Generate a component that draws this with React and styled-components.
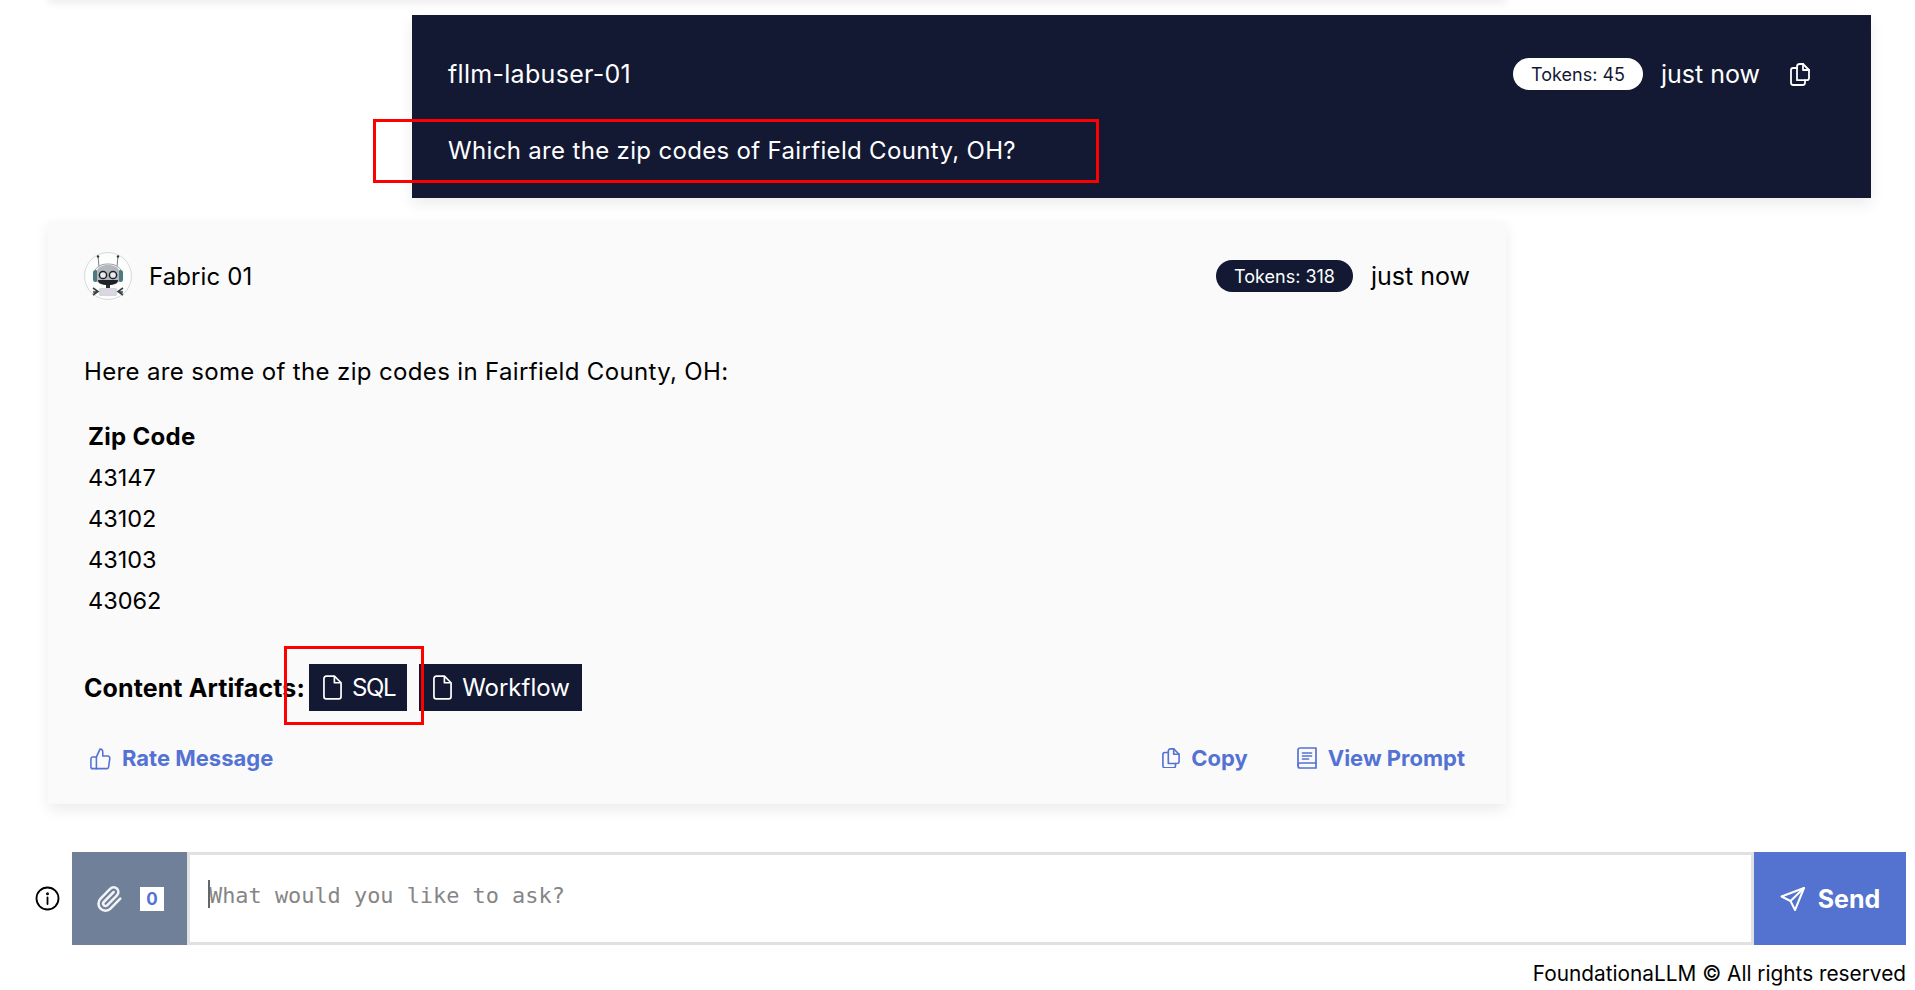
import React from 'react';
import styled, { createGlobalStyle } from 'styled-components';
import { Paperclip } from 'lucide-react';

const GlobalStyle = createGlobalStyle`
    html, body {
        margin: 0;
        padding: 0;
        background: #fff;
        font-family: "Inter", "Liberation Sans", sans-serif;
    }
`;

const CopyIcon = ({ size = 20 }) => (
    <svg width={size} height={size * 1.15} viewBox="0 0 20 23" fill="none" stroke="currentColor" strokeWidth="1.8" strokeLinejoin="round" strokeLinecap="round">
        <path d="M7 17V3.5C7 2.1 8 1 9.4 1h3.6l6 6v8c0 1.2-1 2.2-2.2 2.2H7Z" />
        <path d="M13 1v6h6" />
        <path d="M7 5H3.2C2 5 1 6 1 7.2v12.6C1 21 2 22 3.2 22h9.6c1.2 0 2.2-1 2.2-2.2v-2.6" />
    </svg>
);

const FileIcon = () => (
    <svg width="19" height="25" viewBox="0 0 20 26" fill="none" stroke="currentColor" strokeWidth="1.8" strokeLinejoin="round">
        <path d="M3.5 1h8.5l7 7v14.5c0 1.4-1.1 2.5-2.5 2.5h-13A2.5 2.5 0 0 1 1 22.500v-19A2.500 2.500 0 0 1 3.500 1Z" />
        <path d="M12 1v7h7" />
    </svg>
);

const ThumbIcon = () => (
    <svg width="21" height="23" viewBox="0 0 23 23" preserveAspectRatio="none" fill="none" stroke="currentColor" strokeWidth="1.7" strokeLinejoin="round" strokeLinecap="round">
        <path d="M7 10l4-8c1.700 0 3 1.300 3 3v4h5.500c1.300 0 2.400 1.200 2.200 2.500l-1.300 8.300c-.2 1.100-1.100 1.900-2.200 1.900H7" />
        <path d="M7 10H3a2 2 0 0 0-2 2v7.700a2 2 0 0 0 2 2h4V10Z" />
    </svg>
);

const BookIcon = () => (
    <svg width="20" height="22" viewBox="0 0 20 22" fill="none" stroke="currentColor" strokeWidth="1.7" strokeLinejoin="round" strokeLinecap="round">
        <path d="M3 1h16v20H3a2 2 0 0 1-2-2V3a2 2 0 0 1 2-2Z" />
        <path d="M1 18a2 2 0 0 1 2-2h16M5.500 6h9M5.500 9h9M5.500 12h6" />
    </svg>
);

const InfoIcon = () => (
    <svg width="25" height="25" viewBox="0 0 25 25" fill="none" stroke="#000" strokeWidth="1.8" strokeLinecap="round">
        <circle cx="12.500" cy="12.500" r="11" />
        <path d="M12.500 11.500v6.500" />
        <circle cx="12.500" cy="7.800" r="0.6" fill="#000" />
    </svg>
);

const SendIcon = () => (
    <svg width="26" height="26" viewBox="0 0 26 26" fill="none" stroke="currentColor" strokeWidth="2" strokeLinejoin="round" strokeLinecap="round">
        <path d="M24 2L1.500 10.500l9 4.500 4.500 9L24 2Z" />
        <path d="M24 2L10.500 15" />
    </svg>
);

const RobotAvatar = () => (
    <svg width="48" height="48" viewBox="0 0 48 48">
        <circle cx="24" cy="24" r="23.500" fill="#fcfdfd" stroke="#c8d0d4" strokeWidth="0.8" />
        <path d="M14 4.500l1 10M34 4.500l-1 10" stroke="#6b7278" strokeWidth="0.9" />
        <circle cx="14" cy="4.500" r="1.200" fill="#333" />
        <circle cx="34" cy="4.500" r="1.200" fill="#333" />
        <path d="M10 24c0-8 5-12 14-12s14 4 14 12" fill="none" stroke="#9aa0a5" strokeWidth="1" />
        <rect x="9" y="18" width="5" height="12" rx="2.500" fill="#4d7a80" />
        <rect x="34" y="18" width="5" height="12" rx="2.500" fill="#4d7a80" />
        <path d="M13 20c0-5 5-7 11-7s11 2 11 7v9c0 2-3 3-11 3s-11-1-11-3v-9Z" fill="#b4b7bd" />
        <circle cx="19" cy="23" r="3.600" fill="#e8ecee" stroke="#1f2327" strokeWidth="1.500" />
        <circle cx="29" cy="23" r="3.600" fill="#e8ecee" stroke="#1f2327" strokeWidth="1.500" />
        <path d="M14 28h20c0 3-3 5-10 5s-10-2-10-5Z" fill="#1f2327" />
        <rect x="22" y="33" width="4" height="3" fill="#2a2d31" />
        <rect x="15" y="36" width="18" height="8" rx="1.500" fill="#d4d8db" />
        <rect x="18" y="38" width="12" height="4" fill="#e0d4e8" />
        <path d="M9 36l5 3.500-5 3.500M39 36l-5 3.500 5 3.500M9 40h4M35 40h4" stroke="#3a3e42" strokeWidth="1.600" fill="none" />
    </svg>
);

function App() {
    return (
        <Page>
            <GlobalStyle />
            <PreviousCard />
            <UserRow>
                <UserCard>
                    <CardHeader>
                        <UserName>fllm-labuser-01</UserName>
                        <HeaderMeta>
                            <Tokens light>Tokens: 45</Tokens>
                            <TimeStamp>just now</TimeStamp>
                            <HeaderCopy><CopyIcon /></HeaderCopy>
                        </HeaderMeta>
                    </CardHeader>
                    <UserMessage>Which are the zip codes of Fairfield County, OH?</UserMessage>
                    <QuestionHighlight />
                </UserCard>
            </UserRow>
            <AgentCard>
                <CardHeader>
                    <AgentName>
                        <RobotAvatar />
                        <span>Fabric 01</span>
                    </AgentName>
                    <HeaderMeta>
                        <Tokens>Tokens: 318</Tokens>
                        <TimeStamp>just now</TimeStamp>
                    </HeaderMeta>
                </CardHeader>
                <Intro>Here are some of the zip codes in Fairfield County, OH:</Intro>
                <ZipTable>
                    <thead>
                        <tr><ZipHead>Zip Code</ZipHead></tr>
                    </thead>
                    <tbody>
                        {['43147', '43102', '43103', '43062'].map(zip => (
                            <tr key={zip}><ZipCell>{zip}</ZipCell></tr>
                        ))}
                    </tbody>
                </ZipTable>
                <Artifacts>
                    <ArtifactsLabel>Content Artifacts:</ArtifactsLabel>
                    <ArtifactButton tight><FileIcon />SQL</ArtifactButton>
                    <ArtifactButton><FileIcon />Workflow</ArtifactButton>
                    <ArtifactHighlight />
                </Artifacts>
                <CardFooter>
                    <LinkButton><ThumbIcon />Rate Message</LinkButton>
                    <FooterRight>
                        <LinkButton><CopyIcon size={18} />Copy</LinkButton>
                        <LinkButton><BookIcon />View Prompt</LinkButton>
                    </FooterRight>
                </CardFooter>
            </AgentCard>
            <InputRow>
                <InfoSlot><InfoIcon /></InfoSlot>
                <AttachButton>
                    <Paperclip size={28} strokeWidth={2.2} />
                    <AttachCount>0</AttachCount>
                </AttachButton>
                <InputBox>
                    <Caret />
                    <TextInput placeholder="What would you like to ask?" />
                </InputBox>
                <SendButton>
                    <SendIcon />
                    Send
                </SendButton>
            </InputRow>
            <Footer>FoundationaLLM © All rights reserved</Footer>
        </Page>
    );
}

export default App;

const Page = styled.div`
    width: 1915px;
    height: 990px;
    overflow: hidden;
    display: flex;
    flex-direction: column;
    color: #000;
`;

const PreviousCard = styled.div`
    flex: none;
    height: 10px;
    margin: -10px 409px 0 48px;
    background: #fafafa;
    box-shadow: 0 3px 8px rgba(0, 0, 0, 0.08);
`;

const UserRow = styled.div`
    display: flex;
    justify-content: flex-end;
    padding: 15px 44px 0 0;
`;

const UserCard = styled.div`
    position: relative;
    box-sizing: border-box;
    width: 1459px;
    height: 183px;
    padding: 36px 36px 0;
    background: #131833;
    color: #fff;
    box-shadow: 0 6px 14px rgba(0, 0, 0, 0.08);
`;

const CardHeader = styled.div`
    display: flex;
    align-items: center;
    justify-content: space-between;
`;

const UserName = styled.div`
    font-size: 25px;
    line-height: 46px;
    letter-spacing: 0.3px;
`;

const HeaderMeta = styled.div`
    display: flex;
    align-items: center;
`;

const Tokens = styled.div`
    display: flex;
    align-items: center;
    justify-content: center;
    box-sizing: border-box;
    height: 32px;
    padding: 0 18px;
    border-radius: 16px;
    font-size: 18px;
    background: ${props => (props.light ? '#fff' : '#131833')};
    color: ${props => (props.light ? '#131833' : '#fff')};
`;

const TimeStamp = styled.div`
    margin-left: 18px;
    font-size: 25px;
`;

const HeaderCopy = styled.div`
    display: flex;
    margin: 0 25px 0 30px;
`;

const UserMessage = styled.div`
    margin-top: 37px;
    font-size: 24px;
    line-height: 34px;
    letter-spacing: 0.33px;
`;

const QuestionHighlight = styled.div`
    position: absolute;
    left: -39px;
    top: 104px;
    width: 726px;
    height: 64px;
    box-sizing: border-box;
    border: 3px solid #f00;
`;

const AgentCard = styled.div`
    box-sizing: border-box;
    width: 1458px;
    height: 583px;
    margin: 23px 0 0 48px;
    padding: 31px 36px 0;
    background: #fafafa;
    box-shadow: 0 6px 14px rgba(0, 0, 0, 0.08);
`;

const AgentName = styled.div`
    display: flex;
    align-items: center;
    gap: 17px;
    font-size: 24px;
    letter-spacing: 0.1px;
`;

const Intro = styled.p`
    margin: 55px 0 0;
    font-size: 24px;
    line-height: 34px;
    letter-spacing: 0.35px;
`;

const ZipTable = styled.table`
    margin-top: 27px;
    border-collapse: collapse;
`;

const ZipHead = styled.th`
    padding: 0 4px;
    height: 41px;
    font-size: 24px;
    font-weight: 700;
    letter-spacing: 0.3px;
    text-align: left;
`;

const ZipCell = styled.td`
    padding: 0 4px;
    height: 41px;
    font-size: 23.5px;
`;

const Artifacts = styled.div`
    position: relative;
    display: flex;
    align-items: center;
    height: 47px;
    margin-top: 43px;
`;

const ArtifactsLabel = styled.div`
    width: 225px;
    font-size: 25px;
    font-weight: 700;
    letter-spacing: 0.1px;
    white-space: nowrap;
`;

const ArtifactButton = styled.div`
    display: flex;
    align-items: center;
    gap: 10px;
    box-sizing: border-box;
    height: 47px;
    margin-right: 12px;
    padding: 0 12px 0 14px;
    background: #131833;
    color: #fff;
    font-size: 24px;
    letter-spacing: ${props => (props.tight ? '-1.4px' : '0')};
`;

const ArtifactHighlight = styled.div`
    position: absolute;
    left: 200px;
    top: -18px;
    width: 140px;
    height: 79px;
    box-sizing: border-box;
    border: 3px solid #f00;
`;

const CardFooter = styled.div`
    display: flex;
    align-items: center;
    justify-content: space-between;
    margin-top: 34px;
    padding: 0 5px 0 6px;
`;

const FooterRight = styled.div`
    display: flex;
    gap: 49px;
`;

const LinkButton = styled.div`
    display: flex;
    align-items: center;
    gap: 11px;
    color: #5472d4;
    font-size: 22px;
    font-weight: 700;
`;

const InputRow = styled.div`
    display: flex;
    align-items: stretch;
    height: 93px;
    margin: 48px 9px 0 0;
`;

const InfoSlot = styled.div`
    display: flex;
    align-items: center;
    justify-content: flex-end;
    width: 60px;
    margin-right: 12px;
`;

const AttachButton = styled.div`
    display: flex;
    align-items: center;
    justify-content: center;
    gap: 17px;
    width: 115px;
    background: #708099;
    color: #f1f3f6;
`;

const AttachCount = styled.span`
    display: flex;
    align-items: center;
    justify-content: center;
    width: 24px;
    height: 24px;
    background: #fff;
    color: #5472d4;
    font-size: 17px;
    font-weight: 700;
`;

const InputBox = styled.div`
    position: relative;
    flex: 1;
    display: flex;
    box-sizing: border-box;
    border: 3px solid #e1e1e1;
`;

const Caret = styled.span`
    position: absolute;
    left: 18px;
    top: 25px;
    width: 2px;
    height: 28px;
    background: #666;
`;

const TextInput = styled.textarea`
    flex: 1;
    box-sizing: border-box;
    padding: 26px 19px 0;
    border: none;
    outline: none;
    resize: none;
    font-family: "DejaVu Sans Mono", monospace;
    font-size: 21.9px;
    line-height: 30px;

    &::placeholder {
        color: #858585;
        opacity: 1;
    }
`;

const SendButton = styled.div`
    display: flex;
    align-items: center;
    justify-content: center;
    gap: 12px;
    width: 152px;
    background: #5472d0;
    color: #fff;
    font-size: 25px;
    font-weight: 700;
`;

const Footer = styled.div`
    margin: 16px 9px 0 0;
    text-align: right;
    font-size: 20.8px;
`;
